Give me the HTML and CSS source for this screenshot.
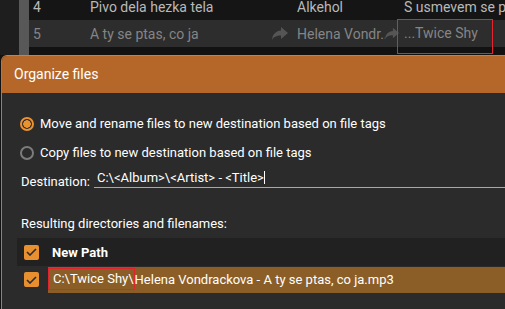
FILE: index.html
```html
<!DOCTYPE html>
<html lang="en">
<head>
    <meta charset="UTF-8">
    <title>Organize files</title>
    <link rel="stylesheet" href="styles.css">
</head>
<body>
  <div class="app">
    <div class="side"></div>
    <div class="scroll"></div>
    <div class="tracks">
      <div class="track">
        <span class="col-num">4</span>
        <span class="col-title">Pivo dela hezka tela</span>
        <span class="col-artist">Alkehol</span>
        <span class="col-album">S usmevem se pij</span>
      </div>
      <div class="track current">
        <span class="col-num">5</span>
        <span class="col-title">A ty se ptas, co ja</span>
        <svg class="arrow" width="16" height="13" viewBox="0 0 16 13"><path d="M9 0 L16 6 L9 12 L9 8.5 C4 8.5 1.5 10 0 13 C0.5 7 4 4 9 3.5 Z" fill="#555"/></svg>
        <span class="col-artist">Helena Vondr...</span>
        <svg class="arrow second" width="14" height="13" viewBox="0 0 16 13"><path d="M9 0 L16 6 L9 12 L9 8.5 C4 8.5 1.5 10 0 13 C0.5 7 4 4 9 3.5 Z" fill="#555"/></svg>
        <span class="col-album marked">...Twice Shy</span>
      </div>
    </div>
  </div>

  <div class="dialog">
    <div class="dialog-title">Organize files</div>
    <div class="dialog-body">
      <label class="radio-row">
        <span class="radio on"></span> Move and rename files to new destination based on file tags
      </label>
      <label class="radio-row">
        <span class="radio"></span> Copy files to new destination based on file tags
      </label>
      <div class="dest-row">
        <span>Destination:</span>
        <div class="dest-input">C:\&lt;Album&gt;\&lt;Artist&gt; - &lt;Title&gt;<span class="caret"></span></div>
      </div>
      <p class="result-label">Resulting directories and filenames:</p>
      <div class="result-list">
        <div class="result-head">
          <span class="check"><svg width="11" height="8" viewBox="0 0 11 8"><path d="M1 4 L4 7 L10 1" stroke="#2b2b2b" stroke-width="1.6" fill="none"/></svg></span>
          <span class="head-text">New Path</span>
        </div>
        <div class="result-row">
          <span class="check"><svg width="11" height="8" viewBox="0 0 11 8"><path d="M1 4 L4 7 L10 1" stroke="#2b2b2b" stroke-width="1.6" fill="none"/></svg></span>
          <span class="row-text"><span class="marked-path">C:\Twice Shy\</span>Helena Vondrackova - A ty se ptas, co ja.mp3</span>
        </div>
      </div>
    </div>
  </div>
</body>
</html>
```

FILE: styles.css
```css
*{
  margin: 0;
  padding: 0;
  box-sizing: border-box;
}

body{
  width: 505px;
  height: 309px;
  overflow: hidden;
  background-color: #121212;
  font-family: Roboto, "Liberation Sans", sans-serif;
  font-size: 13px;
}

.app{
  display: flex;
  height: 55px;
  overflow: hidden;
}

.side{
  width: 19px;
  flex-shrink: 0;
  background-color: #1e1e1e;
}

.scroll{
  width: 10px;
  flex-shrink: 0;
  background-color: #585858;
}

.tracks{
  flex: 1;
  min-width: 0;
  margin-top: -7px;
  background-color: #121212;
}

.track{
  display: flex;
  align-items: center;
  height: 27px;
  color: #b9b9b9;
  font-size: 14px;
  background-color: #151515;
  white-space: nowrap;
}

.track > *{
  flex-shrink: 0;
}

.track.current{
  background-color: #2d2d2d;
  color: #858585;
}

.col-num{
  width: 61px;
  padding-left: 4px;
}

.col-title{
  width: 207px;
}

.track.current .col-title{
  width: 182px;
}

.arrow{
  margin-right: 9px;
}

.arrow.second{
  margin-right: -2px;
}

.col-artist{
  width: 107px;
  overflow: hidden;
}

.track.current .col-artist{
  width: 88px;
}

.col-album.marked{
  align-self: flex-start;
  margin-top: -1px;
  width: 96px;
  height: 35px;
  line-height: 27px;
  padding-left: 6px;
  border: 1px solid #e8232b;
}

.dialog{
  margin-left: 1px;
  border-left: 1px solid #c8732b;
  border-top: 1px solid #d0803a;
  border-top-left-radius: 6px;
  background-color: #2b2b2b;
  height: 254px;
  overflow: hidden;
}

.dialog-title{
  height: 37px;
  background-color: #b5672a;
  color: #fff;
  font-size: 14px;
  line-height: 37px;
  padding-left: 12px;
}

.dialog-body{
  padding: 16px 0 0 15px;
  color: #fff;
}

.radio-row{
  display: flex;
  align-items: center;
  column-gap: 6px;
  height: 29px;
  padding-left: 3px;
}

.radio{
  width: 14px;
  height: 14px;
  border-radius: 50%;
  border: 2px solid #7c7c7c;
}

.radio.on{
  border-color: #ea922f;
  background: radial-gradient(circle, #ea922f 0 3.5px, transparent 4px);
}

.dest-row{
  display: flex;
  align-items: flex-end;
  column-gap: 4px;
  padding-left: 4px;
  height: 23px;
}

.dest-row > span{
  padding-bottom: 1px;
}

.dest-input{
  flex: 1;
  border-bottom: 1px solid #a9a9a9;
  padding: 0 0 2px 3px;
  margin-bottom: 2px;
}

.caret{
  display: inline-block;
  width: 1px;
  height: 13px;
  background-color: #fff;
  vertical-align: -2px;
}

.result-label{
  padding-left: 4px;
  margin-top: 26px;
  height: 22px;
}

.result-head{
  display: flex;
  align-items: center;
  height: 28px;
  background-color: #212121;
  padding-left: 7px;
}

.head-text{
  font-weight: bold;
  margin-left: 13px;
}

.result-row{
  display: flex;
  align-items: center;
  height: 27px;
  padding-left: 7px;
}

.check{
  display: flex;
  align-items: center;
  justify-content: center;
  width: 15px;
  height: 15px;
  background-color: #e8902f;
  border-radius: 2px;
  flex-shrink: 0;
}

.row-text{
  flex: 1;
  margin-left: 9px;
  height: 26px;
  line-height: 26px;
  background-color: #8c5e27;
  white-space: nowrap;
}

.marked-path{
  display: inline-block;
  height: 22px;
  line-height: 20px;
  padding-left: 4px;
  border: 1px solid #e0242b;
  vertical-align: 1px;
}
```
